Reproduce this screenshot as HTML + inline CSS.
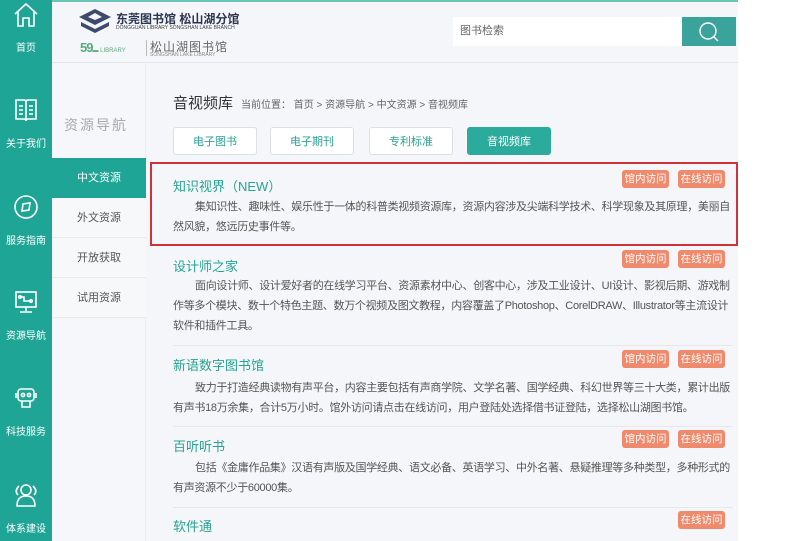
<!DOCTYPE html>
<html><head><meta charset="utf-8"><style>
*{margin:0;padding:0;box-sizing:border-box}
body{width:787px;height:541px;overflow:hidden;background:#fff;font-family:"Liberation Sans","Noto Sans CJK SC",sans-serif;position:relative}
.a{position:absolute}
#side{left:0;top:0;width:52px;height:541px;background:#1fa596}
.lab{position:absolute;left:0;width:52px;text-align:center;color:#fff;font-size:10px}
.ic{position:absolute;left:13px;width:26px;height:26px}
#main{left:52px;top:0;width:686px;height:541px;background:#f4f6f9;border-top:2px solid #6cc4b8}
.sub{position:absolute;left:52px;width:94px;height:40px;line-height:40px;text-align:center;font-size:11px;color:#555;border-bottom:1px solid #e8eaee;background:#f7f8fa}
.tab{position:absolute;top:127px;width:84px;height:28px;line-height:28px;text-align:center;font-size:11px;color:#27a394;background:#fff;border:1px solid #dcdfe3;border-radius:3px}
.t{position:absolute;left:173px;font-size:13px;color:#27a394}
.d{position:absolute;left:173px;width:558px;font-size:11px;letter-spacing:-0.3px;color:#555;line-height:20px;text-indent:22px}
.b{position:absolute;width:47px;height:18px;line-height:18px;text-align:center;font-size:10.5px;color:#fff;background:#f08a6c;border-radius:3px}
.hr{position:absolute;left:173px;width:560px;height:1px;background:#e6e8eb}
</style></head><body>
<div id="side" class="a">
<svg class="ic" style="top:2px" viewBox="0 0 26 26" fill="none" stroke="#fff" stroke-width="1.6"><path d="M2 12 L13 2 L24 12 M5 10 V24 H10 V16 H16 V24 H21 V10"/></svg>
<div class="lab" style="top:39px">首页</div>
<svg class="ic" style="top:97px" viewBox="0 0 26 26" fill="none" stroke="#fff" stroke-width="1.6"><path d="M3 3 H11 Q13 3 13 5 Q13 3 15 3 H23 V22 H15 Q13 22 13 24 Q13 22 11 22 H3 Z M13 5 V24 M6 9 H10 M6 13 H10 M6 17 H10 M16 9 H20 M16 13 H20 M16 17 H20"/></svg>
<div class="lab" style="top:135px">关于我们</div>
<svg class="ic" style="top:194px" viewBox="0 0 26 26" fill="none" stroke="#fff" stroke-width="1.6"><circle cx="13" cy="13" r="11"/><path d="M9 17 L10 10 L17 9 L16 16 Z"/></svg>
<div class="lab" style="top:232px">服务指南</div>
<svg class="ic" style="top:289px" viewBox="0 0 26 26" fill="none" stroke="#fff" stroke-width="1.6"><rect x="3" y="3" width="20" height="15"/><path d="M13 18 V22 M7 23 H19 M7 8 H11 V12 H18"/><circle cx="7" cy="8" r="1.3"/><circle cx="18" cy="12" r="1.3"/></svg>
<div class="lab" style="top:327px">资源导航</div>
<svg class="ic" style="top:385px" viewBox="0 0 26 26" fill="none" stroke="#fff" stroke-width="1.6"><rect x="5" y="4" width="16" height="12" rx="3"/><circle cx="10" cy="10" r="1.6"/><circle cx="16" cy="10" r="1.6"/><path d="M3 8 V13 M23 8 V13 M9 16 V22 H17 V16"/></svg>
<div class="lab" style="top:423px">科技服务</div>
<svg class="ic" style="top:482px" viewBox="0 0 26 26" fill="none" stroke="#fff" stroke-width="1.6"><circle cx="13" cy="8" r="5"/><path d="M4 24 Q4 14 13 14 Q22 14 22 24 Z M5 13 Q1 9 6 4 M21 13 Q25 9 20 4"/></svg>
<div class="lab" style="top:520px">体系建设</div>
</div>
<div id="main" class="a"></div>
<div class="a" style="left:52px;top:62px;width:686px;height:1px;background:#e2e5e9"></div>
<svg class="a" style="left:78px;top:8px" width="34" height="26" viewBox="0 0 34 26"><path d="M17 1 L33 9 L17 17 L1 9 Z" fill="#3c4a6e"/><path d="M3 14 L17 21 L31 14 V18 L17 25 L3 18 Z" fill="#3c4a6e"/><path d="M10 9 L17 5 L24 9 L17 12 Z" fill="#f4f6f9"/></svg>
<div class="a" style="left:116px;top:10px;font-size:12px;font-weight:bold;color:#2c3550">东莞图书馆 松山湖分馆</div>
<div class="a" style="left:116px;top:25px;font-size:5px;color:#444">DONGGUAN LIBRARY SONGSHAN LAKE BRANCH</div>
<div class="a" style="left:80px;top:40px;font-size:13px;font-weight:bold;color:#5aa97e;letter-spacing:-1px">59<span style="font-size:6px;font-weight:normal;letter-spacing:0">▬ LIBRARY</span></div>
<div class="a" style="left:146px;top:40px;width:1px;height:16px;background:#bbb"></div>
<div class="a" style="left:150px;top:38px;font-size:12px;color:#666;letter-spacing:1px">松山湖图书馆</div>
<div class="a" style="left:150px;top:52px;font-size:5px;color:#888">SONGSHAN LAKE LIBRARY</div>
<div class="a" style="left:453px;top:17px;width:229px;height:29px;background:#fff;font-size:11px;color:#666;line-height:29px;padding-left:7px">图书检索</div>
<div class="a" style="left:682px;top:17px;width:54px;height:29px;background:#3aa39c"></div>
<svg class="a" style="left:697px;top:19px" width="24" height="26" viewBox="0 0 24 26" fill="none" stroke="#fff" stroke-width="1.4"><circle cx="11" cy="12" r="8"/><path d="M17 18 L21 22"/></svg>
<div class="a" style="left:52px;top:63px;width:94px;height:478px;background:#f5f7fa;border-right:1px solid #eceef1"></div>
<div class="a" style="left:64px;top:115px;font-size:14px;color:#aaa;letter-spacing:2px">资源导航</div>
<div class="sub" style="top:158px;background:#1fa596;color:#fff;border:none">中文资源</div>
<div class="sub" style="top:198px">外文资源</div>
<div class="sub" style="top:238px">开放获取</div>
<div class="sub" style="top:278px">试用资源</div>
<div class="a" style="left:173px;top:92px;font-size:15px;color:#333">音视频库</div>
<div class="a" style="left:241px;top:96px;font-size:10px;color:#666">当前位置： 首页 &gt; 资源导航 &gt; 中文资源 &gt; 音视频库</div>
<div class="tab" style="left:173px">电子图书</div>
<div class="tab" style="left:270px">电子期刊</div>
<div class="tab" style="left:369px">专利标准</div>
<div class="tab" style="left:467px;background:#2aab9c;color:#fff;border-color:#2aab9c">音视频库</div>
<div class="a" style="left:150px;top:162px;width:588px;height:84px;border:2px solid #d0323a"></div>
<div class="t" style="top:176px">知识视界（NEW）</div>
<div class="b" style="left:622px;top:170px">馆内访问</div><div class="b" style="left:678px;top:170px">在线访问</div>
<div class="d" style="top:197px">集知识性、趣味性、娱乐性于一体的科普类视频资源库，资源内容涉及尖端科学技术、科学现象及其原理，美丽自然风貌，悠远历史事件等。</div>
<div class="t" style="top:256px">设计师之家</div>
<div class="b" style="left:622px;top:250px">馆内访问</div><div class="b" style="left:678px;top:250px">在线访问</div>
<div class="d" style="top:276px">面向设计师、设计爱好者的在线学习平台、资源素材中心、创客中心，涉及工业设计、UI设计、影视后期、游戏制作等多个模块、数十个特色主题、数万个视频及图文教程，内容覆盖了Photoshop、CorelDRAW、Illustrator等主流设计软件和插件工具。</div>
<div class="hr" style="top:345px"></div>
<div class="t" style="top:355px">新语数字图书馆</div>
<div class="b" style="left:622px;top:350px">馆内访问</div><div class="b" style="left:678px;top:350px">在线访问</div>
<div class="d" style="top:378px">致力于打造经典读物有声平台，内容主要包括有声商学院、文学名著、国学经典、科幻世界等三十大类，累计出版有声书18万余集，合计5万小时。馆外访问请点击在线访问，用户登陆处选择借书证登陆，选择松山湖图书馆。</div>
<div class="hr" style="top:426px"></div>
<div class="t" style="top:436px">百听听书</div>
<div class="b" style="left:622px;top:430px">馆内访问</div><div class="b" style="left:678px;top:430px">在线访问</div>
<div class="d" style="top:458px">包括《金庸作品集》汉语有声版及国学经典、语文必备、英语学习、中外名著、悬疑推理等多种类型，多种形式的有声资源不少于60000集。</div>
<div class="hr" style="top:507px"></div>
<div class="t" style="top:516px">软件通</div>
<div class="b" style="left:678px;top:511px">在线访问</div>
</body></html>
